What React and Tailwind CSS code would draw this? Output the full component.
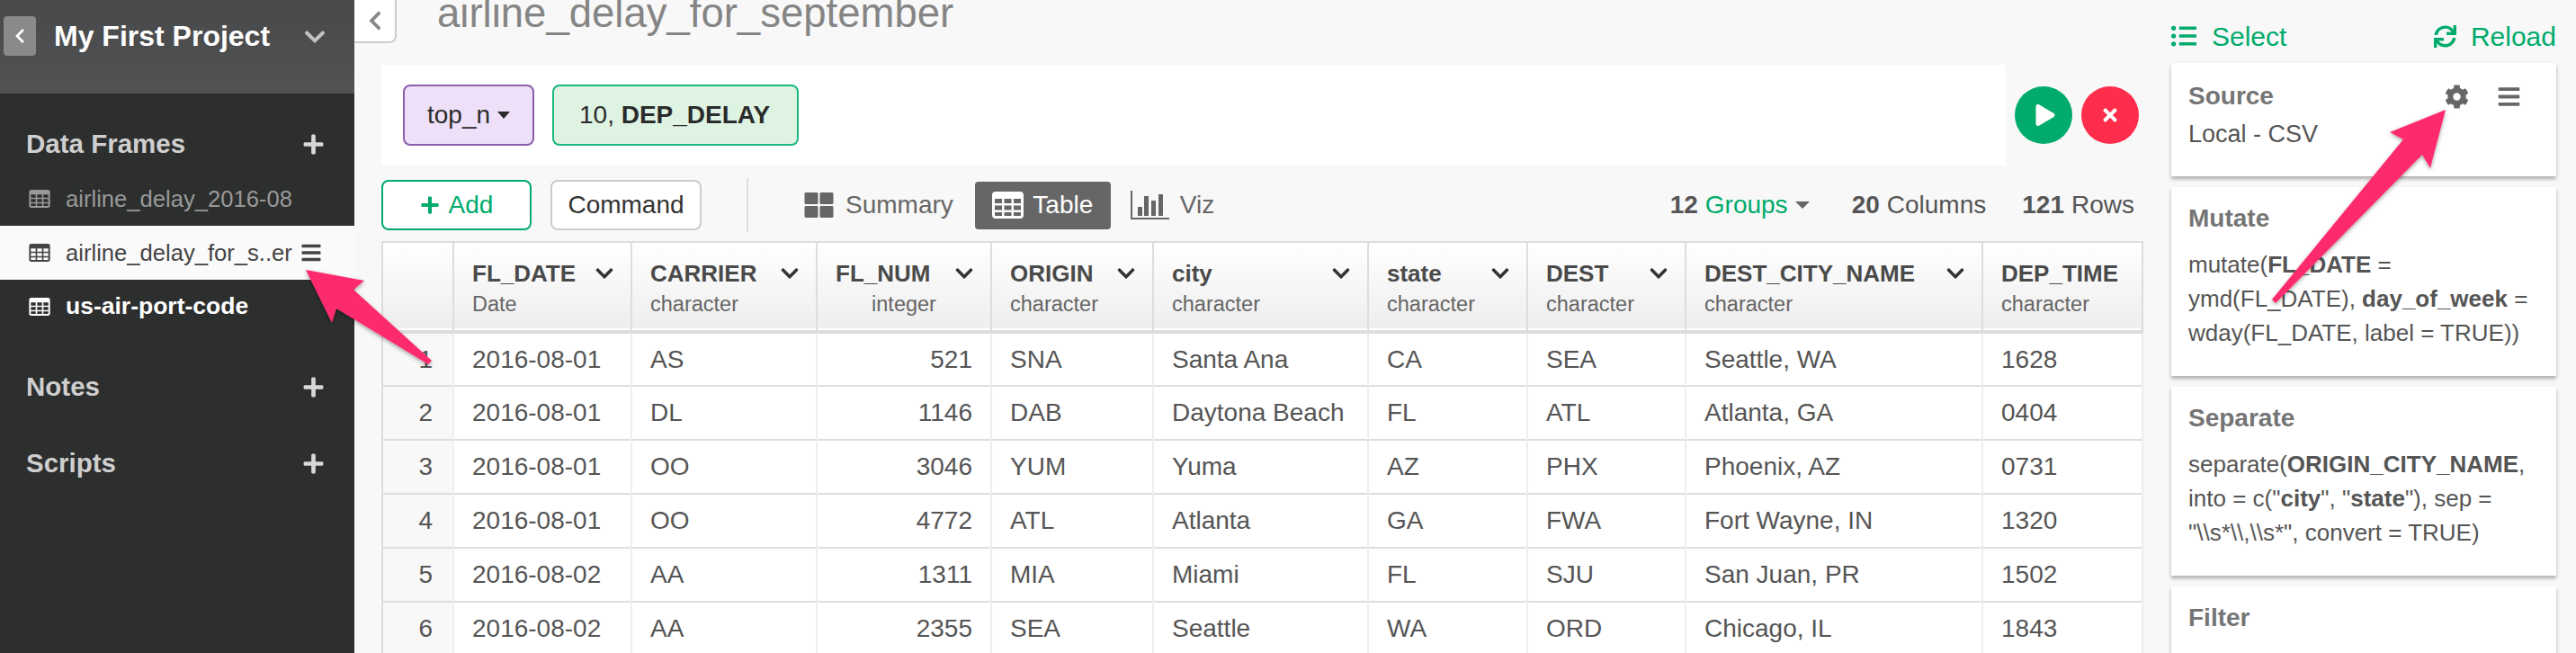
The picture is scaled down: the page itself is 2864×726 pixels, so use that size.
import { FaPlus, FaBars, FaCog, FaListUl, FaSync, FaThLarge, FaPlay, FaTimes, FaChevronDown, FaChevronLeft } from 'react-icons/fa';

const columns = [
  { name: 'FL_DATE', type: 'Date', width: 'w-[198px]' },
  { name: 'CARRIER', type: 'character', width: 'w-[206px]' },
  { name: 'FL_NUM', type: 'integer', width: 'w-[194px]', numeric: true },
  { name: 'ORIGIN', type: 'character', width: 'w-[180px]' },
  { name: 'city', type: 'character', width: 'w-[239px]' },
  { name: 'state', type: 'character', width: 'w-[177px]' },
  { name: 'DEST', type: 'character', width: 'w-[176px]' },
  { name: 'DEST_CITY_NAME', type: 'character', width: 'w-[330px]' },
  { name: 'DEP_TIME', type: 'character', width: 'w-[178px]', noMenu: true },
];

const rows = [
  ['2016-08-01', 'AS', '521', 'SNA', 'Santa Ana', 'CA', 'SEA', 'Seattle, WA', '1628'],
  ['2016-08-01', 'DL', '1146', 'DAB', 'Daytona Beach', 'FL', 'ATL', 'Atlanta, GA', '0404'],
  ['2016-08-01', 'OO', '3046', 'YUM', 'Yuma', 'AZ', 'PHX', 'Phoenix, AZ', '0731'],
  ['2016-08-01', 'OO', '4772', 'ATL', 'Atlanta', 'GA', 'FWA', 'Fort Wayne, IN', '1320'],
  ['2016-08-02', 'AA', '1311', 'MIA', 'Miami', 'FL', 'SJU', 'San Juan, PR', '1502'],
  ['2016-08-02', 'AA', '2355', 'SEA', 'Seattle', 'WA', 'ORD', 'Chicago, IL', '1843'],
];

function GridIcon({ className }) {
  return (
    <svg viewBox="0 0 35 30" className={className} fill="currentColor" fillRule="evenodd">
      <path d="M4 0h27a4 4 0 0 1 4 4v22a4 4 0 0 1-4 4H4a4 4 0 0 1-4-4V4a4 4 0 0 1 4-4z M3 8v5h8V8z M13.500 8v5h8V8z M24 8v5h8V8z M3 15.500v5h8v-5z M13.500 15.500v5h8v-5z M24 15.500v5h8v-5z M3 23v3a1 1 0 0 0 1 1h7v-4z M13.500 23v4h8v-4z M24 23v4h7a1 1 0 0 0 1-1v-3z" />
    </svg>
  );
}

function BarsChartIcon({ className }) {
  return (
    <svg viewBox="0 0 43 32" className={className} fill="currentColor">
      <path d="M0 0h2v30h41v2H0z" />
      <rect x="8" y="18" width="5" height="10" />
      <rect x="15" y="6" width="5" height="22" />
      <rect x="23" y="11" width="5" height="17" />
      <rect x="31" y="4" width="5" height="24" />
    </svg>
  );
}

function SideSection({ title, className, children }) {
  return (
    <div className={className}>
      <div className="flex items-center justify-between pl-[29px] pr-[33px] h-[34px]">
        <span className="text-[29.500px] font-bold text-[#cfcfcf] leading-none">{title}</span>
        <FaPlus className="w-[25px] h-[25px] text-[#d8d8d8]" />
      </div>
      {children}
    </div>
  );
}

function Sidebar() {
  return (
    <aside className="w-[394px] shrink-0 bg-[#2d2e2e] flex flex-col">
      <div className="h-[104px] shrink-0 bg-gradient-to-b from-[#48494b] to-[#515254] flex items-start pt-[18px] pl-1">
        <div className="w-9 h-11 rounded bg-[#8a8a8a] flex items-center justify-center">
          <FaChevronLeft className="w-[14px] h-[18px] text-white" />
        </div>
        <span className="ml-5 mt-[2px] text-[32px] leading-[40px] font-bold text-white">My First Project</span>
        <FaChevronDown className="ml-[37px] mt-[10px] w-[26px] h-[26px] text-[#c2c2c2]" />
      </div>
      <SideSection title="Data Frames" className="mt-[39px]">
        <div className="mt-[14px] h-[60px] flex items-center pl-8 text-[#999999]">
          <GridIcon className="w-6 h-5" />
          <span className="ml-[17px] text-[25.600px]">airline_delay_2016-08</span>
        </div>
        <div className="h-[60px] flex items-center pl-8 bg-[#fafafa] text-[#444444]">
          <GridIcon className="w-6 h-5" />
          <span className="ml-[17px] text-[25.600px]">airline_delay_for_s..er</span>
          <FaBars className="ml-[9px] w-6 h-6" />
        </div>
        <div className="h-[60px] flex items-center pl-8 text-white">
          <GridIcon className="w-6 h-5" />
          <span className="ml-[17px] text-[26.500px] font-bold">us-air-port-code</span>
        </div>
      </SideSection>
      <SideSection title="Notes" className="mt-[42px]" />
      <SideSection title="Scripts" className="mt-[51px]" />
    </aside>
  );
}

function CommandBar() {
  return (
    <div className="flex items-center">
      <div className="w-[1806px] h-[112px] bg-white flex items-center gap-5 pl-6">
        <div className="h-[68px] w-[146px] rounded-lg border-2 border-[#8c5fad] bg-[#eee0f8] flex items-center justify-center text-[28px] text-[#2b2b2b]">
          top_n
          <span className="ml-2 border-x-[7px] border-t-[8px] border-x-transparent border-t-[#2b2b2b]" />
        </div>
        <div className="h-[68px] w-[274px] rounded-lg border-2 border-[#1ab77f] bg-[#dff3e3] flex items-center pl-7 text-[28px] text-[#2b2b2b]">
          10,&nbsp;<b>DEP_DELAY</b>
        </div>
      </div>
      <div className="ml-[10px] w-16 h-16 rounded-full bg-[#00ab6c] flex items-center justify-center">
        <FaPlay className="w-6 h-6 ml-1 text-white" />
      </div>
      <div className="ml-[10px] w-16 h-16 rounded-full bg-[#fe2d4b] flex items-center justify-center">
        <FaTimes className="w-[22px] h-[22px] text-white" />
      </div>
    </div>
  );
}

function Toolbar() {
  return (
    <div className="mt-4 h-14 flex items-center w-[1957px] text-[28px]">
      <button className="w-[167px] h-14 rounded-lg border-2 border-[#00ab6c] bg-white text-[#00ab6c] flex items-center justify-center gap-[10px] font-medium">
        <FaPlus className="w-[22px] h-[22px]" />
        Add
      </button>
      <button className="ml-[21px] w-[168px] h-14 rounded-lg border-2 border-[#cccccc] bg-white text-[#333333] flex items-center justify-center">
        Command
      </button>
      <div className="ml-[50px] w-[2px] h-[60px] bg-[#dddddd]" />
      <div className="ml-[61px] flex items-center gap-3 text-[#666666]">
        <FaThLarge className="w-[35px] h-[32px]" />
        <span>Summary</span>
      </div>
      <div className="ml-6 w-[151px] h-[53px] rounded bg-[#666666] text-white flex items-center justify-center gap-[10px]">
        <GridIcon className="w-[35px] h-[30px]" />
        <span>Table</span>
      </div>
      <div className="ml-[22px] flex items-center gap-[12px] text-[#666666]">
        <BarsChartIcon className="w-[43px] h-8" />
        <span>Viz</span>
      </div>
      <div className="ml-auto flex items-center text-[#555555]">
        <b>12</b>
        <span className="ml-2 text-[#00ab6c]">Groups</span>
        <span className="ml-2 border-x-[8px] border-t-[8px] border-x-transparent border-t-[#666666]" />
        <b className="ml-[47px]">20</b>
        <span className="ml-2">Columns</span>
        <b className="ml-[40px]">121</b>
        <span className="ml-2 mr-2">Rows</span>
      </div>
    </div>
  );
}

function DataTable() {
  return (
    <table className="mt-3 table-fixed w-[1957px] border-collapse border-2 border-[#dddddd] text-[#555555] text-[28px]">
      <colgroup>
        <col className="w-[79px]" />
        {columns.map((c) => (
          <col key={c.name} className={c.width} />
        ))}
      </colgroup>
      <thead>
        <tr className="h-[100px] bg-gradient-to-b from-white to-[#eeeeee] border-b-4 border-[#dddddd]">
          <th className="border-r-2 border-[#dddddd]" />
          {columns.map((c) => (
            <th key={c.name} className="border-r-2 border-[#dddddd] px-5 font-normal text-left align-middle">
              <div className="flex items-center justify-between">
                <span className="text-[26px] font-bold text-[#4a4a4a] leading-[38px]">{c.name}</span>
                {!c.noMenu && <FaChevronDown className="-mr-[2px] w-[22px] h-[22px] text-[#333333]" />}
              </div>
              <div className={`text-[23.500px] leading-[30px] text-[#666666] ${c.numeric ? 'text-center' : ''}`}>{c.type}</div>
            </th>
          ))}
        </tr>
      </thead>
      <tbody>
        {rows.map((row, i) => (
          <tr key={i} className="h-[60px] bg-white border-b-2 border-[#dddddd]">
            <td className="bg-[#f8f8f8] border-r-2 border-[#eeeeee] text-right pr-[22px]">{i + 1}</td>
            {row.map((cell, j) => (
              <td
                key={j}
                className={`border-r-2 border-[#eeeeee] px-5 whitespace-nowrap ${columns[j].numeric ? 'text-right' : ''}`}
              >
                {cell}
              </td>
            ))}
          </tr>
        ))}
      </tbody>
    </table>
  );
}

function Card({ title, className, children, actions }) {
  return (
    <div className={`shrink-0 bg-white px-[19px] shadow-[0_3px_4px_rgba(0,0,0,0.3)] text-[26px] leading-[38px] text-[#555555] ${className}`}>
      <div className="flex items-center justify-between">
        <span className="text-[28px] font-bold text-[#757575]">{title}</span>
        {actions}
      </div>
      {children}
    </div>
  );
}

function RightPanel() {
  return (
    <div className="w-[428px] flex flex-col">
      <div className="h-[70px] shrink-0 pt-[10px] flex items-center justify-between text-[30px] font-medium text-[#00ab6c]">
        <div className="flex items-center gap-[17px]">
          <FaListUl className="w-7 h-7" />
          Select
        </div>
        <div className="flex items-center gap-4">
          <FaSync className="w-[25px] h-[25px]" />
          Reload
        </div>
      </div>
      <div className="flex flex-col gap-3">
        <Card
          title="Source"
          className="h-[126px] pt-[18px]"
          actions={
            <div className="flex items-center gap-[31px] pr-[20px] text-[#666666]">
              <FaCog className="w-[27px] h-[27px]" />
              <FaBars className="w-[27px] h-[27px]" />
            </div>
          }
        >
          <div className="mt-[4px] text-[27px]">Local - CSV</div>
        </Card>
        <Card title="Mutate" className="h-[210px] pt-4">
          <div className="mt-[13px]">
            mutate(<b>FL_DATE</b> =<br />
            ymd(FL_DATE), <b>day_of_week</b> =<br />
            wday(FL_DATE, label = TRUE))
          </div>
        </Card>
        <Card title="Separate" className="h-[210px] pt-4">
          <div className="mt-[13px]">
            separate(<b>ORIGIN_CITY_NAME</b>,<br />
            into = c("<b>city</b>", "<b>state</b>"), sep =<br />
            "\\s*\\,\\s*", convert = TRUE)
          </div>
        </Card>
        <Card title="Filter" className="h-[100px] pt-4" />
      </div>
    </div>
  );
}

// annotation arrows drawn on top of the screenshot
function Arrows() {
  return (
    <svg viewBox="0 0 2864 726" className="absolute inset-0 w-[2864px] h-[726px] pointer-events-none">
      <defs>
        <filter id="arrow-shadow" x="-20%" y="-20%" width="140%" height="140%">
          <feDropShadow dx="0" dy="2" stdDeviation="2" floodColor="#000000" floodOpacity="0.35" />
        </filter>
      </defs>
      <g fill="#fe2c6e" filter="url(#arrow-shadow)">
        <path d="M340 300 L405 312 L393 322 L480 401 L476 405 L374 343 L369 359 Z" />
        <path d="M2719 122 L2702 187 L2693 172 L2530 337 L2526 333 L2672 155 L2657 147 Z" />
      </g>
    </svg>
  );
}

export default function App() {
  return (
    <div className="relative w-[2864px] h-[726px] overflow-hidden flex bg-[#f8f8f8] font-['Liberation_Sans',Arial,sans-serif]">
      <Sidebar />
      <div className="w-[2004px] shrink-0 flex flex-col">
        <div className="h-[72px] shrink-0 flex items-start">
          <div className="w-[47px] h-12 bg-white border-r-2 border-b-2 border-[#cccccc] rounded-br-lg flex items-center justify-center">
            <FaChevronLeft className="w-[18px] h-6 text-[#888888]" />
          </div>
          <div className="ml-[45px] -mt-[13px] text-[45.500px] leading-[56px] text-[#858585]">airline_delay_for_september</div>
        </div>
        <div className="pl-[30px]">
          <CommandBar />
          <Toolbar />
          <DataTable />
        </div>
      </div>
      <div className="ml-4">
        <RightPanel />
      </div>
      <Arrows />
    </div>
  );
}
